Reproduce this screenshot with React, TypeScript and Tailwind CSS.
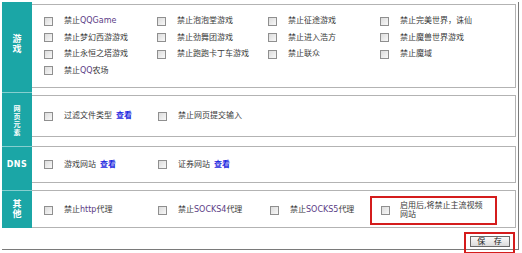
import React from "react";

const font = { fontFamily: '"DejaVu Sans", "Noto Sans CJK SC", sans-serif' };

function Box() {
  return (
    <span className="inline-block w-[9px] h-[9px] shrink-0 border border-[#8f8f8f] bg-gradient-to-br from-[#dcdcdc] to-[#f8f8f8]" />
  );
}

function Item({ children, w }: { children: React.ReactNode; w?: string }) {
  return (
    <div className={`flex items-center ${w ?? ""}`}>
      <Box />
      <span className="ml-[11px] whitespace-nowrap text-[8px] leading-[10px] text-[#3a3a3a]">{children}</span>
    </div>
  );
}

const L = ({ children }: { children: React.ReactNode }) => (
  <span className="text-[#5b3c86]">{children}</span>
);
const Look = () => <span className="ml-[4px] font-bold text-[#1f2be0]">查看</span>;

function Label({ children, h, top, className }: { children: React.ReactNode; h: string; top?: boolean; className?: string }) {
  return (
    <div
      className={`w-[30px] ${h} shrink-0 bg-[#1ba6a6] flex flex-col items-center justify-center text-white font-bold ${top ? "border-t border-[#86cfcf]" : ""} ${className ?? ""}`}
    >
      {children}
    </div>
  );
}

export default function App() {
  return (
    <div className="w-[522px] h-[253px] bg-white pt-[2px] pl-[2px] overflow-hidden" style={font}>
      <div className="w-[517px] h-[248px] border-r border-b border-[#7a7a7a] flex flex-col">
        {/* 游戏 */}
        <div className="flex h-[90px]">
          <Label h="h-[90px]" className="text-[9px] leading-[10px] pb-[6px]">
            <span>游</span>
            <span>戏</span>
          </Label>
          <div className="flex-1 pt-[2px] pr-[2px]">
            <div className="h-[84px] border-t border-b border-r border-[#b3b3b3] pl-[12px] pt-[8px]">
              <div className="grid grid-cols-[113px_111px_112px_1fr] auto-rows-[16.5px]">
                <Item>禁止<L>QQGame</L></Item>
                <Item>禁止泡泡堂游戏</Item>
                <Item>禁止征途游戏</Item>
                <Item>禁止完美世界，诛仙</Item>
                <Item>禁止梦幻西游游戏</Item>
                <Item>禁止劲舞团游戏</Item>
                <Item>禁止进入浩方</Item>
                <Item>禁止魔兽世界游戏</Item>
                <Item>禁止永恒之塔游戏</Item>
                <Item>禁止跑跑卡丁车游戏</Item>
                <Item>禁止联众</Item>
                <Item>禁止魔域</Item>
                <Item>禁止<L>QQ</L>农场</Item>
              </div>
            </div>
          </div>
        </div>

        {/* 网页元素 */}
        <div className="flex h-[54px]">
          <Label h="h-[54px]" top className="text-[7px] leading-[8px] pt-[2px]">
            <span>网</span>
            <span>页</span>
            <span>元</span>
            <span>素</span>
          </Label>
          <div className="flex-1 pt-[3px] pr-[2px]">
            <div className="h-[42px] border-t border-b border-r border-[#b3b3b3] pl-[12px] flex items-center">
              <Item w="w-[114px]">过滤文件类型<Look /></Item>
              <Item>禁止网页提交输入</Item>
            </div>
          </div>
        </div>

        {/* DNS */}
        <div className="flex h-[44px]">
          <Label h="h-[44px]" top className="text-[8px] leading-[10px] pb-[8px] tracking-[0.5px]">
            <span>DNS</span>
          </Label>
          <div className="flex-1 pr-[2px]">
            <div className="h-[37px] border-t border-b border-r border-[#b3b3b3] pl-[12px] flex items-center">
              <Item w="w-[114px]">游戏网站<Look /></Item>
              <Item>证券网站<Look /></Item>
            </div>
          </div>
        </div>

        {/* 其他 */}
        <div className="flex h-[38px]">
          <Label h="h-[38px]" top className="text-[9px] leading-[10px] pb-[2px]">
            <span>其</span>
            <span>他</span>
          </Label>
          <div className="flex-1 pr-[2px]">
            <div className="h-[38px] border-t border-b border-r border-[#b3b3b3] pl-[12px] flex items-center pt-[2px]">
              <Item w="w-[114px]">禁止<L>http</L>代理</Item>
              <Item w="w-[112px]">禁止<L>SOCKS4</L>代理</Item>
              <Item w="w-[100px]">禁止<L>SOCKS5</L>代理</Item>
              <div className="w-[127px] h-[29px] border-2 border-[#d41c1c] flex items-center pl-[9px]">
                <Box />
                <span className="ml-[10px] text-[8px] leading-[9px] text-[#3a3a3a] whitespace-nowrap">
                  启用后,将禁止主流视频
                  <br />
                  网站
                </span>
              </div>
            </div>
          </div>
        </div>

        {/* footer */}
        <div className="flex-1 flex justify-end pr-[3px]">
          <div className="mt-[4px] w-[51px] h-[22px] shrink-0 border-2 border-[#d41c1c] flex items-start justify-center pt-[2px]">
            <button className="w-[40px] h-[11px] border border-[#6a6a6a] bg-gradient-to-b from-[#fafafa] to-[#dcdcdc] text-[8px] leading-[9px] text-[#222] flex items-center justify-center tracking-[3px] pl-[3px]">
              保 存
            </button>
          </div>
        </div>
      </div>
    </div>
  );
}
